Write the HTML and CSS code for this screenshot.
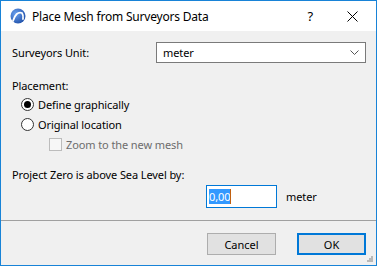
FILE: index.html
```html
<!DOCTYPE html>
<html lang="en">
<head>
    <meta charset="UTF-8">
    <title>Place Mesh from Surveyors Data</title>
    <link rel="stylesheet" href="styles.css">
</head>
<body>
    <div class="window">
        <div class="titlebar">
            <svg class="logo" width="16" height="16" viewBox="0 0 16 16">
                <defs>
                    <radialGradient id="g" cx="0.35" cy="0.35" r="0.75">
                        <stop offset="0" stop-color="#6aa0ee"/>
                        <stop offset="1" stop-color="#1f4fa8"/>
                    </radialGradient>
                </defs>
                <circle cx="8" cy="8" r="7.5" fill="url(#g)"/>
                <path d="M3 13 Q6 3 12 5 Q13.5 7 13 11" fill="none" stroke="#fff" stroke-width="1.8" stroke-linecap="round"/>
            </svg>
            <span class="title">Place Mesh from Surveyors Data</span>
            <span class="help">?</span>
            <svg class="close" width="11" height="11" viewBox="0 0 11 11">
                <path d="M0.5 0.5 L10.5 10.5 M10.5 0.5 L0.5 10.5" stroke="#000" stroke-width="1"/>
            </svg>
        </div>
        <div class="content">
            <div class="row unit">
                <label class="unit-label">Surveyors Unit:</label>
                <div class="select">
                    <span>meter</span>
                    <svg width="9" height="5" viewBox="0 0 9 5"><path d="M0.5 0.5 L4.5 4.5 L8.5 0.5" fill="none" stroke="#555" stroke-width="1"/></svg>
                </div>
            </div>
            <div class="group-label">Placement:</div>
            <div class="option"><span class="radio checked"></span>Define graphically</div>
            <div class="option"><span class="radio"></span>Original location</div>
            <div class="option sub disabled"><span class="check"></span>Zoom to the new mesh</div>
            <div class="group-label zero">Project Zero is above Sea Level by:</div>
            <div class="row level">
                <div class="input"><span class="sel">0,00</span><span class="caret"></span></div>
                <span class="unit-text">meter</span>
            </div>
        </div>
        <div class="footer">
            <button class="btn">Cancel</button>
            <button class="btn default">OK</button>
        </div>
        <svg class="grip" width="7" height="7" viewBox="0 0 7 7" fill="#b8b8b8">
            <rect x="5" y="1" width="2" height="2"/>
            <rect x="3" y="3" width="2" height="2"/><rect x="5" y="3" width="2" height="2"/>
            <rect x="1" y="5" width="2" height="2"/><rect x="3" y="5" width="2" height="2"/><rect x="5" y="5" width="2" height="2"/>
        </svg>
    </div>
</body>
</html>
```

FILE: styles.css
```css
body { margin: 0; font-family: "Noto Sans", sans-serif; font-size: 11px; letter-spacing: -0.1px; color: #000; }
.window { position: relative; width: 377px; height: 266px; box-sizing: border-box; border: 1px solid #1883d7; display: flex; flex-direction: column; background: #f0f0f0; }
.titlebar { height: 30px; background: #fff; display: flex; align-items: center; padding-left: 9px; }
.logo { margin-right: 6px; }
.title { flex: 1; font-size: 12px; letter-spacing: -0.2px; }
.help { font-size: 13px; margin-right: 34px; }
.close { margin-right: 18px; }
.content { flex: 1; padding: 11px 10px 0 11px; display: flex; flex-direction: column; }
.row { display: flex; align-items: center; }
.unit-label { width: 144px; }
.select { flex: 1; height: 19px; border: 1px solid #7a7a7a; background: #fff; display: flex; align-items: center; justify-content: space-between; padding: 0 6px 0 6px; }
.group-label { margin-top: 15px; line-height: 16px; }
.option { display: flex; align-items: center; height: 20px; padding-left: 9px; }
.option:first-of-type { margin-top: 1px; }
.radio { width: 11px; height: 11px; border: 1px solid #333; border-radius: 50%; background: #fff; margin-right: 4px; display: flex; align-items: center; justify-content: center; }
.radio.checked::after { content: ""; width: 7px; height: 7px; border-radius: 50%; background: #000; }
.sub { padding-left: 37px; }
.disabled { color: #6d6d6d; }
.check { width: 11px; height: 11px; border: 1px solid #bcbcbc; background: #f7f7f7; margin-right: 4px; }
.zero { margin-top: 13px; }
.level { margin-top: 2px; padding-left: 194px; }
.input { width: 67px; height: 21px; border: 1px solid #0078d7; background: #fff; display: flex; align-items: center; padding-left: 2px; }
.sel { background: #3399ff; color: #fff; line-height: 15px; }
.caret { width: 1px; height: 15px; background: #c06010; }
.unit-text { margin-left: 9px; }
.footer { height: 45px; border-top: 1px solid #a0a0a0; display: flex; justify-content: flex-end; align-items: flex-start; gap: 21px; padding: 12px 10px 0 0; box-sizing: border-box; }
.btn { width: 69px; height: 22px; font: inherit; background: #e1e1e1; border: 1px solid #adadad; padding: 0; color: #000; }
.btn.default { border: 2px solid #0078d7; }
.grip { position: absolute; right: 3px; bottom: 3px; }
```
